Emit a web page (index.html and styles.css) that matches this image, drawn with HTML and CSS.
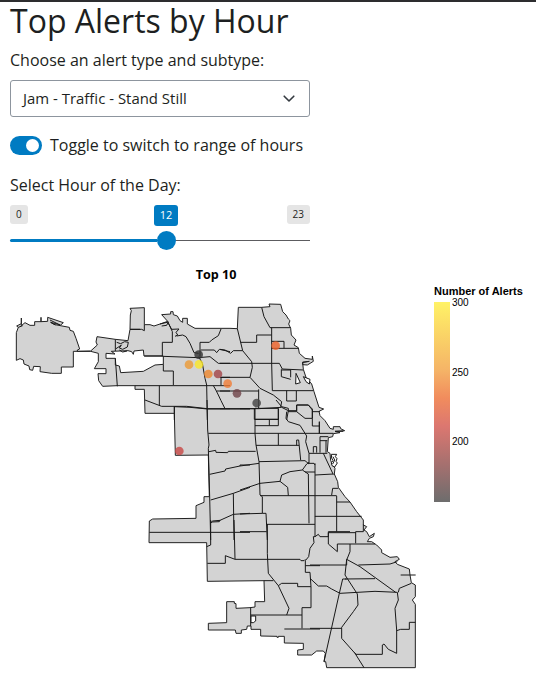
FILE: index.html
```html
<!DOCTYPE html>
<html lang="en">
<head>
<meta charset="utf-8">
<title>Top Alerts by Hour</title>
<link rel="stylesheet" href="styles.css">
</head>
<body>
<main class="page">
  <h1>Top Alerts by Hour</h1>
  <label class="label">Choose an alert type and subtype:</label>
  <div class="select"><span>Jam - Traffic - Stand Still</span>
    <svg width="12" height="8" viewBox="0 0 12 8"><path d="M1.2 1.2 6 6 10.8 1.2" fill="none" stroke="#343a40" stroke-width="1.6" stroke-linecap="round" stroke-linejoin="round"/></svg>
  </div>
  <div class="toggle-row"><span class="switch"><span class="knob"></span></span><span>Toggle to switch to range of hours</span></div>
  <label class="label hour-label">Select Hour of the Day:</label>
  <div class="slider">
    <div class="marks"><span class="mark">0</span><span class="mark current">12</span><span class="mark">23</span></div>
    <div class="track"><span class="filled"></span><span class="handle"></span></div>
  </div>
  <section class="chart">
    <div class="plot">
      <h2>Top 10</h2>
      <svg class="map" width="432" height="390" viewBox="0 870 1296 1170">
        <path class="area" d="M49 1081V998L55 982 50 978 64 971V954 977L75 968 90 976H104V965H123V952V965L143 964V952L190 968 182 975 152 967 165 974 208 982 210 991 220 994 228 1015 239 1047 232 1050V1054L272 1053 292 1035 288 1026 291 1010 346 1018 384 1022 390 988 391 945 394 932 390 925 433 923V974L450 974 462 978 480 972 503 964 485 944 512 942V935H519L520 944 532 948 540 962 548 967V955H562V972L585 985H690L712 986 715 922H785L810 920 807 912 842 913 848 935 858 945 865 957 870 962 866 972 872 985 874 1005 888 1020 882 1035 895 1043 898 1060 915 1075 937 1078V1068L940 1084 922 1095 908 1094V1086L928 1084 908 1088 910 1108 918 1132 935 1152 942 1175 950 1200 957 1222 971 1227 957 1234 960 1247 975 1262 990 1285 1000 1288V1280H1020L1022 1286 1034 1292 1005 1294 1020 1298 1000 1301 998 1310 985 1313 982 1355 990 1360 992 1382 1005 1405 1003 1422 1013 1445 1015 1462 1035 1490 1050 1506 1070 1535 1090 1560V1575L1100 1580 1092 1590 1100 1595 1108 1610 1123 1600 1120 1610 1108 1615 1102 1625 1115 1625 1130 1635 1145 1650V1658L1170 1672 1192 1670 1198 1678 1185 1685 1192 1693 1228 1707 1230 1725 1234 1748 1246 1755V1790L1237 1800 1246 1813V2003H980L977 1985H972L976 1960 970 1953H950L935 1965H893V1950L910 1948V1930L853 1929V1909H835V1912H831V1909L782 1908V1888H753V1878H742L740 1888 724 1890V1900H708L706 1890H625V1870L680 1868V1805H703V1810L708 1811V1825L750 1823 765 1821V1805H794L792 1742 622 1744 620 1628H447L448 1563 458 1557 588 1555V1517L612 1507V1490H628L625 1365 526 1366 523 1240H435L433 1168H405V1157H352L308 1159 296 1142 294 1121H318V1106H283L295 1085V1060L272 1054H220V1101H184V1120H155L120 1115 121 1100 101 1099 98 1111 89 1109 87 1098 72 1092 70 1080 60 1076ZM318 1060L345 1062 334 1054 384 1052 395 1055 400 1063 402 1053 430 1050 432 1068H490V1093L465 1095 430 1114 362 1118 358 1098 346 1095V1075H318Z"/>
        <g class="lines">
          <g transform="translate(0 870)"><path d="M346 148V183M346 205 352 289M390 118H420M350 157l12 4 12-6 11 2-3 14-14 7-10-4 7-10M348 176l15-10M358 180l10 6 13-3M152 97l14 8M150 90l30 15M55 112l13-5"/></g>
          <g transform="translate(360 870)"><path d="M30 118H65L73 122V104M73 198H127M127 200V157H157V125L143 94M145 100l10 18 22-1-9 10 5 8-8 4M170 138l18-3 10 5 12 20 12 28 14 2M240 200V157H268L275 150 295 137 303 117M242 180H283L290 188 298 178 330 185M130 199 235 203 270 200 295 220H330M130 223V243H160V285M45 287H330M118 287V345M75 330 125 349H200L262 356H330M163 349V390M236 200 247 220 255 265 260 285 262 390M280 287 286 297 295 315 303 332 315 356M290 303H330M303 285V262H330M120 102l25-6-5 10-15 2"/></g>
          <g transform="translate(660 870)"><path d="M125 52 132 80 150 113H212M52 116 68 182 95 215 97 232 90 262 120 295 160 315 185 335 182 352M62 157H110V135H155M155 113V220L157 302M155 154H192V175M155 175H235M0 178 15 180 32 190 40 182H68M0 220H178L187 237 250 240M184 238V260L212 268M212 262V240H184M0 262H90M0 303H116M116 298V355M157 302H280M200 302V333H229V303M0 356H116L185 352 205 362M103 356V388H175V356M230 362V345H265L277 357V385M230 362H205L200 390"/><path class="hole" d="M228 250 241 278 227 282ZM250 260 270 268 268 282 258 275Z"/></g>
          <g transform="translate(420 1200)"><path d="M103 40V20M103 20 150 22 203 27H330M201 0 203 90 207 135 205 145 209 290 212 420M205 100H345M207 155l20-4 1 6 35 1 2-4h82M209 223 255 213 257 207 300 198V195H330M212 300 280 280 330 262M280 280 282 420M212 368 218 363 240 361 280 343 330 340M28 397H330"/></g>
          <g transform="translate(720 1200)"><path d="M45 25V100L48 135 57 185 60 285 67 290V340M45 25H115V77H45M45 58H115M88 58V77M0 26H45M45 100H280M115 100V135M48 136H177M170 136V120H176L182 180M57 185 195 182 207 192M0 198 57 190M140 35 138 55 145 65 180 76 195 100 200 108 197 125 207 160V190H222L225 195M108 0 125 20 145 25V35H170M170 15V35M170 15H205L217 30V55H195L170 35M217 35H240M217 55V78H238M238 65V100M207 160H262M220 158V140H230V158M240 110V158M240 110H265M240 122H262M258 122V158M0 270 60 250 120 244 143 262 145 287M120 244 125 225 150 215 187 210 200 192 207 187M187 210 205 222 207 370M195 216H225V190M225 216V350M225 225 280 222M250 160l30 64M60 287H290M275 285 278 265H295M290 288V395M290 306H330M225 349H365M80 373H225M0 342 67 340H78L82 420M0 395H80M225 349V410L235 403 240 410H265V395H330"/><path class="hole" d="M274 163l16 0-4 7 5 6-3 8 4 5-8 12-8-4-2-9 5-6-4-8zM279 170l5 10-6 12"/><path d="M238 65V100M285 94H310"/></g>
          <g transform="translate(600 1560)"><path d="M32 0V75L20 80M32 10 35 6 58 5 60 0M102 0 105 117M22 130H76V107L105 118H300L303 122H312L316 118M202 12 202 100 205 160 235 197 267 265 260 285M345 50 340 50 342 68 330 85 326 110 316 122V157H330L333 200V263H306V325M316 137H360M235 197 245 190H293V200H333M192 182H220M152 285H306M152 263V318M253 327H360"/><path class="hole" d="M153 288H167V303L160 308H153Z"/></g>
          <g transform="translate(930 1560)"><path d="M137 70V35H160V14M137 38H55V72L82 95V72H195M0 135H110V120L120 95V72M110 118 150 140 257 217M145 135 240 132 262 125M110 118 105 165 142 222 144 255 130 275 95 322V355L135 400 162 443M105 177 195 176M0 175 25 198H50L65 207 90 220 195 214 262 217M98 177 88 220 42 425M98 177H110M0 325H95M262 217 265 240 255 265 260 330V400L235 388 222 372 217 375V403H138L133 397M260 332 272 328H298V307H316M265 217 268 205 304 190M272 165H317"/></g>
        </g>
        <g class="points">
          <circle cx="596" cy="1064" r="13" fill="#333"/><circle cx="567" cy="1094" r="13" fill="#ec9a35"/><circle cx="597" cy="1093" r="13" fill="#fbe726"/><circle cx="625" cy="1122" r="13" fill="#ee872e"/><circle cx="654" cy="1122" r="13" fill="#a34448"/><circle cx="683" cy="1151" r="13" fill="#f27d36"/><circle cx="827" cy="1037" r="13" fill="#f0622a"/><circle cx="711" cy="1180" r="13" fill="#704449"/><circle cx="770" cy="1209" r="13" fill="#444"/><circle cx="538" cy="1353" r="13" fill="#c94845"/>
        </g>
      </svg>
    </div>
    <aside class="legend"><h3>Number of Alerts</h3>
      <div class="scale"><div class="ramp"></div><div class="ticks"><span>300</span><span>250</span><span>200</span></div></div>
    </aside>
  </section>
</main>
</body>
</html>
```
FILE: styles.css
```css
* { box-sizing: border-box; }
body { margin: 0; background: #fff; color: #1d1f21; font: 16px/24px "Open Sans", sans-serif; overflow: hidden; }
.page { height: 687px; border-top: 2px solid #2d2d2f; }
h1 { margin: 0 10px; font-size: 32px; line-height: 38px; font-weight: 400; }
.label { display: block; margin: 8px 10px 0; }
.select { display: flex; align-items: center; justify-content: space-between; width: 300px; height: 37px; margin: 8px 10px 0; padding: 0 14px 0 12px; border: 1px solid #8d959e; border-radius: 3px; font-size: 14.95px; }
.select span { padding-bottom: 2px; }
.toggle-row { display: flex; align-items: center; gap: 8px; height: 24px; margin: 16px 10px 0; }
.switch { display: flex; align-items: center; justify-content: flex-end; width: 32px; height: 19px; padding-right: 3px; border-radius: 10px; background: #007bc2; }
.knob { width: 13px; height: 13px; border-radius: 50%; background: #fff; }
.hour-label { margin-top: 16px; }
.slider { width: 300px; height: 53px; margin: 8px 10px 0; }
.marks { display: grid; grid-template-columns: 144px 24px 1fr; height: 26px; align-items: start; }
.mark { justify-self: start; padding: 0 6px; border-radius: 3px; background: #e5e5e5; font-size: 10px; line-height: 19px; }
.mark:last-child { justify-self: end; }
.current { padding: 0 0 1px; width: 24px; text-align: center; background: #007bc2; color: #fff; font-size: 11px; line-height: 20px; }
.track { display: flex; align-items: center; height: 19px; background: linear-gradient(#5c5c60, #5c5c60) center / 100% 1px no-repeat; }
.filled { width: 147px; height: 3px; border-radius: 2px 0 0 2px; background: #007bc2; }
.handle { width: 19px; height: 19px; border-radius: 50%; background: #007bc2; }
.chart { display: flex; gap: 2px; }
.plot { width: 432px; height: 420px; }
h2 { margin: 0; padding-top: 8px; height: 32px; font-size: 12.6px; line-height: 18px; text-align: center; color: #000; }
.map { display: block; }
.area { fill: #d3d3d3; fill-rule: evenodd; stroke: #222; stroke-width: 3; stroke-linejoin: round; }
.lines { fill: none; stroke: #181818; stroke-width: 3; stroke-linejoin: round; }
.hole { fill: #fff; }
.points { opacity: .8; }
.legend { padding-top: 27px; font-family: "Liberation Sans", Arial, sans-serif; color: #000; }
h3 { margin: 0; font-size: 11px; line-height: 12px; white-space: nowrap; }
.scale { display: flex; gap: 2px; padding-top: 5px; }
.ramp { width: 16px; height: 200px; background: linear-gradient(#fff266 0%, #f5b467 34%, #f18c5d 48%, #dc7770 62%, #a3706f 82%, #6d6d6d 100%); }
.ticks { display: flex; flex-direction: column; gap: 59.5px; margin-top: -4px; font-size: 10px; line-height: 10px; }
```
